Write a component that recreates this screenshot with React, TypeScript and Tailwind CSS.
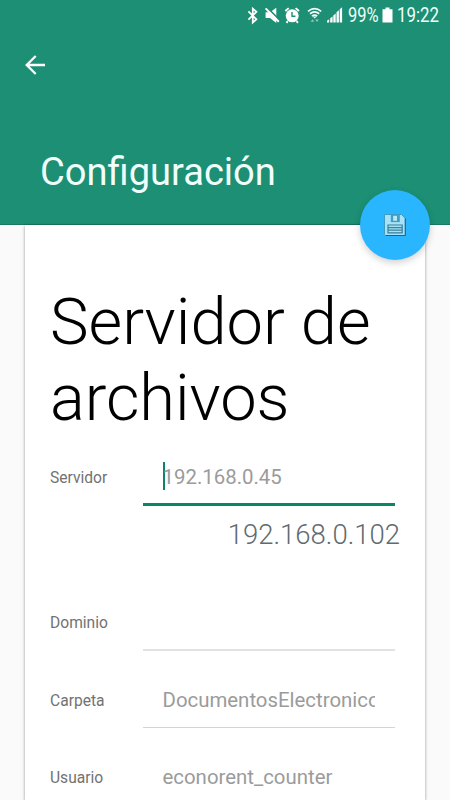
import type { ReactNode } from "react";

function StatusBar() {
  return (
    <div className="flex h-8 items-center pl-[246px] text-[#f0fffb]">
      <svg className="h-8 w-[110px] shrink-0" viewBox="246 0 110 32" fill="none">
        <path d="M248.4 11.4l8 7.9-3.6 3.2V8.7l3.6 3.2-8 7.7" stroke="white" strokeWidth="1.8" />
        <path d="M265.6 12.3h4.4l6.3-4.6v15.2l-6.3-5h-4.4z" fill="white" />
        <path d="M267 7.4l13 13" stroke="#1c8f74" strokeWidth="1.6" />
        <path d="M265.6 8.4l13.2 13.4" stroke="white" strokeWidth="2" />
        <circle cx="292.2" cy="15.8" r="6.5" fill="white" />
        <path d="M285.3 11l3.4-2.9M299 11l-3.4-2.9M287.8 21.2l-1.3 1.6M296.6 21.2l1.3 1.6" stroke="white" strokeWidth="1.9" />
        <path d="M292 12v4.2h3.4" stroke="#1c8f74" strokeWidth="1.4" />
        <path d="M308 11.3q6.6-5.2 13.2 0M310 13.7q4.6-3.5 9.2 0M312 16.1q2.6-2 5.2 0" stroke="white" strokeWidth="1.7" />
        <path d="M312.8 16.6h3.8l-1.9 2z" fill="white" />
        <path d="M310.7 21.8l1.8-2.6 1.8 2.6zM315.2 19.4l1.8 2.6 1.8-2.6z" fill="#8dcbbb" />
        <path d="M327 22.5v-1.8l2.2-1.5v3.3zM330.2 22.5v-4.3l2.4-1.8v6.1zM333.3 22.5v-7l2.4-1.9v8.9zM336.5 22.5V12.3l2.4-2v12.2zM339.7 22.5V9.3l2.4-2v15.2z" fill="white" />
      </svg>
      <span className="-ml-[8px] w-[31px] shrink-0 origin-left scale-x-[0.85] whitespace-nowrap text-[19.4px] leading-8">99%</span>
      <svg className="ml-[3px] h-8 w-3 shrink-0" viewBox="382 0 12 32">
        <path d="M385.5 7.5h4v1.7h3v13.3h-10V9.2h3z" fill="white" />
      </svg>
      <span className="ml-[3px] origin-left scale-x-[0.87] whitespace-nowrap text-[19.4px] leading-8">19:22</span>
    </div>
  );
}

function SaveButton() {
  return (
    <button
      aria-label="Guardar"
      className="absolute left-[360px] top-[190px] z-10 flex size-[70px] items-center justify-center rounded-full bg-[#29b6ff] shadow-[0_3px_7px_rgba(0,0,0,0.18)]"
    >
      <svg className="size-6" viewBox="0 0 24 24" fill="none">
        <path d="M1.5 1.5H18.5L22.3 5.3V22.5H2.7L1.5 21.3z" fill="#a9e2f8" stroke="#3f9cc2" />
        <path d="M22.3 5.3V22.5H2.7" stroke="#24617c" />
        <path d="M7.8 1.5h9v7.6h-9z" fill="#3f9fc6" />
        <path d="M10.2 2.8h3.8v5h-3.8z" fill="#b9e9f7" />
        <path d="M5 12h14.2v7.8H5z" fill="#a7e2f4" stroke="#327f9e" strokeWidth="1.2" />
        <path d="M5 14.6h14.2M5 17.2h14.2" stroke="#38849d" strokeWidth="1.2" />
      </svg>
    </button>
  );
}

function Field({ label, rowClass, inputClass, children }: { label: string; rowClass: string; inputClass: string; children?: ReactNode }) {
  return (
    <div className={`flex ${rowClass}`}>
      <label className="w-[92.5px] shrink-0 pt-[18px] text-[15.6px] leading-5 text-[#727272]">{label}</label>
      <div className={`w-[252.5px] px-5 pt-[14px] text-[20.4px] leading-[26px] text-[#9b9b9b] ${inputClass}`}>{children}</div>
    </div>
  );
}

export default function App() {
  return (
    <div className="relative h-[800px] w-[450px] overflow-hidden bg-[#fafafa] font-['Roboto',sans-serif]">
      <header className="h-[225px] border-b border-[#187860] bg-[#1c8f74]">
        <StatusBar />
        <div className="pl-[25px] pt-[23px]">
          <svg className="h-5 w-[21px]" viewBox="0 0 21 20" fill="none" stroke="white" strokeWidth="2.3">
            <path d="M20 10H2M10.7 1L1.7 10l9 9" />
          </svg>
        </div>
        <h1 className="pl-10 pt-[73px] text-[38.1px] leading-[48px] text-[#f0fffb]">Configuración</h1>
      </header>
      <SaveButton />
      <main className="mx-[25px] h-[575px] bg-white pl-[25px] pt-[59px] shadow-[0_1px_3px_rgba(0,0,0,0.4)]">
        <h2 className="text-[65px] font-light leading-[76px] text-black">
          Servidor de
          <br />
          <span className="tracking-[-0.1px]">archivos</span>
        </h2>
        <div className="mt-[14px]">
          <div className="flex h-[57px]">
            <label className="w-[92.5px] shrink-0 pt-[18px] text-[15.6px] leading-5 text-[#727272]">Servidor</label>
            <div className="flex h-14 w-[252.5px] border-b-[3px] border-[#0b8468] px-5 pt-3">
              <span className="h-7 w-0.5 bg-[#0b8468]" />
              <span className="-ml-0.5 pt-[2px] text-[20.4px] leading-[26px] text-[#9b9b9b]">192.168.0.45</span>
            </div>
          </div>
          <p className="h-[88px] pr-[25px] pt-[10px] text-right text-[27.5px] font-light leading-[36px] text-[#606b70]">192.168.0.102</p>
          <Field label="Dominio" rowClass="h-[78px]" inputClass="h-[56px] border-b-2 border-[#e2e2e2]" />
          <Field label="Carpeta" rowClass="h-[77px]" inputClass="h-[55px] border-b border-[#d4d4d4]">
            <span className="block overflow-hidden whitespace-nowrap">DocumentosElectronicos</span>
          </Field>
          <Field label="Usuario" rowClass="h-[77px]" inputClass="h-[55px] border-b border-[#d4d4d4]">econorent_counter</Field>
        </div>
      </main>
    </div>
  );
}
